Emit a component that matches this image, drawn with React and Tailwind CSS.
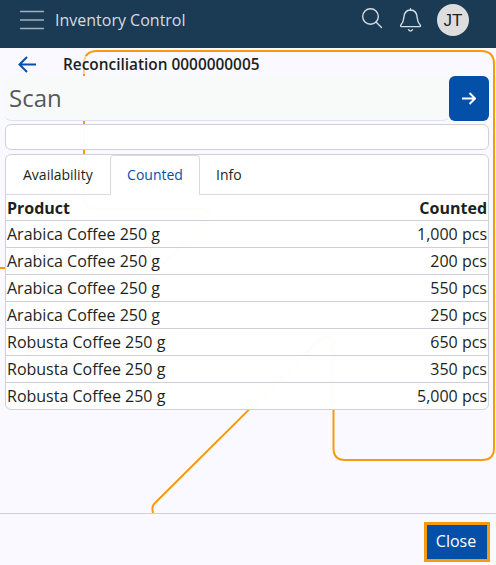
const rows = [
  ["Arabica Coffee 250 g", "1,000 pcs"],
  ["Arabica Coffee 250 g", "200 pcs"],
  ["Arabica Coffee 250 g", "550 pcs"],
  ["Arabica Coffee 250 g", "250 pcs"],
  ["Robusta Coffee 250 g", "650 pcs"],
  ["Robusta Coffee 250 g", "350 pcs"],
  ["Robusta Coffee 250 g", "5,000 pcs"],
];

// Decorative line pattern that runs behind the content.
function Backdrop() {
  return (
    <svg
      className="pointer-events-none absolute inset-0 -z-10"
      width="496"
      height="465"
      viewBox="0 48 496 465"
      fill="none"
      stroke="#f59b11"
      strokeWidth="2"
    >
      <path d="M84 196 V64 Q84 51 97 51 H481 Q494 51 494 64 V448 Q494 460 482 460 H345 Q333.5 460 333.5 448 V345 Q333.5 337 326 337 Q322 337 319 340 L154 504 Q151.500 507 153 513" />
      <path d="M84 196 Q84 209 97 209 H198 Q214 209 206 222 L35 390 Q28 396 28 385 V280 Q28 268 16 268 H0" />
    </svg>
  );
}

function Header() {
  return (
    <header className="flex h-12 shrink-0 items-start bg-[#1b3a54] text-[#d5dce2]">
      <svg className="ml-5 mt-[10px]" width="24" height="20" fill="none" stroke="#a4b0bb" strokeWidth="1.5">
        <path d="M0 1.500 H24 M0 10 H24 M0 18.500 H24" />
      </svg>
      <h1 className="ml-[11px] mt-[9px] text-[16px] leading-[22px]">Inventory Control</h1>
      <svg className="ml-auto mt-[7px]" width="22" height="22" fill="none" stroke="#d5dce2" strokeWidth="1.4">
        <circle cx="9.500" cy="9.500" r="7.800" />
        <path d="M15 15 L20.500 20.500" strokeLinecap="round" />
      </svg>
      <svg className="ml-[17px] mt-[8px]" width="22" height="25" fill="none" stroke="#d5dce2" strokeWidth="1.4" strokeLinecap="round" strokeLinejoin="round">
        <path d="M10.500 .7 V2.200 M1.500 18.600 H19.500 Q21 18.500 20.200 17 C18 14.700 17.500 13.500 17.300 10.200 C17 5 14.500 2 10.500 2 S4 5 3.700 10.200 C3.500 13.500 3 14.700 .8 17 Q0 18.500 1.500 18.600 M8.500 21.700 Q10.500 24.500 12.500 21.700" />
      </svg>
      <div className="ml-[15px] mr-[27px] mt-1 flex size-8 items-center justify-center rounded-full bg-[#dddddd] pt-px font-['Liberation_Sans',sans-serif] text-[17px] text-[#1f1f1f]">
        JT
      </div>
    </header>
  );
}

export default function App() {
  return (
    <div className="flex h-[565px] w-[496px] flex-col overflow-hidden bg-[#faf9ff] font-['Open_Sans','Noto_Sans',sans-serif] text-[#1d1f21]">
      <Header />
      <main className="relative isolate h-[465px] shrink-0 pl-[5px] pr-[7px]">
        <Backdrop />
        <div className="flex h-7 items-start">
          <svg className="ml-[13px] mt-[8px]" width="18" height="17" fill="none" stroke="#0450a8" strokeWidth="2">
            <path d="M18 8.500 H2 M9 1 L1.500 8.500 L9 16" />
          </svg>
          <h2 className="ml-[27px] mt-[8px] bg-[#faf9ff]/60 text-[15.4px] font-semibold leading-[18px]">
            Reconciliation 0000000005
          </h2>
        </div>
        <div className="flex h-[45px]">
          <div className="flex-1 rounded-bl-md rounded-br-md border-b border-[#dbe3f3] bg-[#f8faf9] pl-1 text-[24px] leading-[44px] text-[#55595c]">
            Scan
          </div>
          <button className="flex w-10 items-center justify-center rounded-md bg-[#044fa8]">
            <svg width="14" height="13" fill="none" stroke="white" strokeWidth="2">
              <path d="M0 6.500 H13 M7.500 1 L13 6.500 L7.500 12" />
            </svg>
          </button>
        </div>
        <div className="mt-[3px] h-[26px] rounded-md border border-[#cfd1d6] bg-white/98" />
        <section className="mt-1 h-[256px] overflow-hidden rounded-md border border-[#cfd1d6] bg-white/98">
          <nav className="flex h-10 border-b border-[#d8dbe2] text-[14px] leading-[40px]">
            <div className="w-[104px] pl-[17px]">Availability</div>
            <div className="h-10 w-[90px] rounded-t border border-b-0 border-[#d8dbe2] bg-white text-center leading-[38px] text-[#0450a8]">
              Counted
            </div>
            <div className="pl-[16px]">Info</div>
          </nav>
          <div className="text-[16px]">
            <div className="flex h-[26px] justify-between border-b border-[#cdd1d7] px-px font-bold leading-[26px]">
              <span>Product</span>
              <span>Counted</span>
            </div>
            {rows.map(([product, counted], i) => (
              <div
                key={i}
                className="flex h-[27px] justify-between border-b border-[#cdd1d7] px-px leading-[27px] last:border-0"
              >
                <span>{product}</span>
                <span>{counted}</span>
              </div>
            ))}
          </div>
        </section>
      </main>
      <footer className="flex h-[52px] items-start justify-end border-t border-[#cfd1d6] pr-[6px] pt-2">
        <button className="h-10 w-[66px] border-[3px] border-[#f59b11] bg-[#044fa8] pb-0.5 pr-0.5 text-[16px] leading-[32px] text-white">
          Close
        </button>
      </footer>
    </div>
  );
}
